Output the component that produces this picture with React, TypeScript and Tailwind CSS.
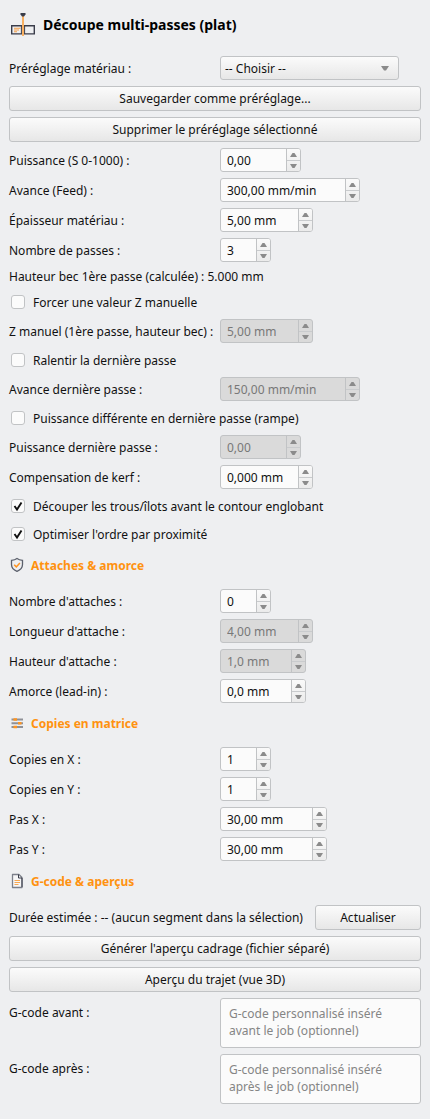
import { useId, type ReactNode } from "react";

function CutIcon() {
  return (
    <svg width="24" height="24" viewBox="0 0 24 24" fill="none" aria-hidden="true">
      <path d="M0.700 12.700h22.600v8.200h-22.600z" stroke="#3a3d4a" strokeWidth="1.400" />
      <path d="M10.400 12.500v8.500M13.600 12.500v8.500" stroke="#3a3d4a" />
      <path d="M3 15.300h6.500M3 17h5M3 18.700h3" stroke="#f5a04a" strokeWidth="1.100" />
      <path d="M11 3h2v20h-2z" fill="#f8b062" />
      <path d="M9.500 0h5v1.500L13 3.500h-2L9.500 1.500z" fill="#3a3d4a" />
    </svg>
  );
}

function ShieldIcon() {
  return (
    <svg width="16" height="16" viewBox="0 0 16 16" fill="none" aria-hidden="true">
      <path
        d="M8 1.500C6.500 2.700 4.500 3.200 2.500 3.300v4.200c0 3.200 2.200 5.500 5.500 6.900 3.300-1.400 5.500-3.700 5.500-6.900V3.300C11.500 3.200 9.500 2.700 8 1.500z"
        stroke="#5b606c"
        strokeWidth="1.300"
      />
      <path d="M5.200 7.800l2.100 2.100 3.600-4" stroke="#ff9420" strokeWidth="1.500" />
    </svg>
  );
}

function SlidersIcon() {
  return (
    <svg width="16" height="16" viewBox="0 0 16 16" aria-hidden="true">
      <path d="M2.500 3.500h11.500v2H2.500zM2.500 7.200h11.500v2H2.500zM2.500 11h11.500v2H2.500z" fill="#8f9197" />
      <path d="M4.500 3.200h3.500v2.600H4.500zM9 6.900h3.500v2.600H9zM4.500 10.700h3.500v2.600H4.500z" fill="#ff9420" />
    </svg>
  );
}

function FileIcon() {
  return (
    <svg width="16" height="16" viewBox="0 0 16 16" fill="none" aria-hidden="true">
      <path d="M10 1.500H3.500v13h9.500V4.500z" fill="#f6f6f7" stroke="#7c808a" strokeWidth="1.300" strokeLinejoin="round" />
      <path d="M9.500 1.500v3.500h3.500v9" stroke="#3a3d4a" />
      <path d="M5.500 7.500h5.500M5.500 9.500h5.500M5.500 11.500h4" stroke="#f8a850" />
    </svg>
  );
}

function Row({ label, id, children }: { label: string; id: string; children: ReactNode }) {
  return (
    <div className="grid grid-cols-[211px_1fr] items-center">
      <label htmlFor={id} className="whitespace-nowrap">
        {label}
      </label>
      {children}
    </div>
  );
}

type SpinProps = { label: string; value: string; width: string; disabled?: boolean };

function SpinRow({ label, value, width, disabled }: SpinProps) {
  const id = useId();
  const arrow = "flex flex-1 justify-center";
  return (
    <Row label={label} id={id}>
      <div
        className={`flex h-6 overflow-hidden rounded-[3px] border border-[#c1c3c5] ${width} ${
          disabled ? "bg-[#dadada] text-[#787878]" : "bg-[#fbfbfb]"
        }`}
      >
        <input
          id={id}
          type="text"
          defaultValue={value}
          disabled={disabled}
          className="min-w-0 flex-1 bg-transparent pl-1.5 outline-none"
        />
        <div
          className={`flex w-3.5 flex-col border-l border-[#c1c3c5] ${
            disabled ? "" : "bg-linear-to-b from-[#fafafa] to-[#ebebeb]"
          }`}
        >
          <button
            type="button"
            aria-label="Augmenter"
            disabled={disabled}
            className={`items-end pb-[3px] ${arrow}`}
          >
            <svg width="7" height="4" viewBox="0 0 7 4" aria-hidden="true">
              <path d="M0 4L2.500 0h2l2.500 4z" fill="#8b8b8b" />
            </svg>
          </button>
          <button
            type="button"
            aria-label="Diminuer"
            disabled={disabled}
            className={`items-start border-t border-[#c9cbcd] pt-[3px] ${arrow}`}
          >
            <svg width="7" height="4" viewBox="0 0 7 4" aria-hidden="true">
              <path d="M0 0l2.500 4h2l2.500-4z" fill="#8b8b8b" />
            </svg>
          </button>
        </div>
      </div>
    </Row>
  );
}

function CheckRow({ label, checked }: { label: string; checked?: boolean }) {
  return (
    <label className="flex h-[22px] items-center gap-2 pl-0.5">
      <span className="grid">
        <input
          type="checkbox"
          defaultChecked={checked}
          className="peer col-start-1 row-start-1 size-3.5 appearance-none rounded-[3px] border border-[#c1c3c5] bg-[#fbfbfb]"
        />
        <svg
          viewBox="0 0 14 14"
          fill="none"
          aria-hidden="true"
          className="pointer-events-none invisible col-start-1 row-start-1 size-3.5 peer-checked:visible"
        >
          <path d="M3.500 7l2.500 3.500 4.500-7" stroke="#111" strokeWidth="1.900" />
        </svg>
      </span>
      {label}
    </label>
  );
}

function Heading({ icon, children }: { icon: ReactNode; children: ReactNode }) {
  return (
    <h2 className="mb-1 flex h-7 items-center gap-1.5 font-bold text-[#ff9210]">
      {icon}
      {children}
    </h2>
  );
}

function Button({ children, className = "w-full" }: { children: ReactNode; className?: string }) {
  return (
    <button
      type="button"
      className={`flex h-[25px] items-center justify-center rounded-[3px] border border-[#c1c3c5] bg-linear-to-b from-[#fbfbfb] to-[#e7e7e7] ${className}`}
    >
      {children}
    </button>
  );
}

function CodeRow({ label, placeholder }: { label: string; placeholder: string }) {
  const id = useId();
  return (
    <div className="grid grid-cols-[211px_1fr] items-start">
      <label htmlFor={id} className="pt-1.5">
        {label}
      </label>
      <textarea
        id={id}
        placeholder={placeholder}
        className="block h-[50px] w-full resize-none rounded-[3px] border border-[#c1c3c5] bg-[#fbfbfb] px-2 py-1.5 outline-none placeholder:text-[#858585]"
      />
    </div>
  );
}

export default function App() {
  return (
    <main className="flex min-h-screen flex-col gap-1.5 bg-[#eeeff1] px-[9px] pb-4 font-['Noto_Sans',sans-serif] text-[12px] leading-[17px] text-[#111]">
      <h1 className="flex h-[50px] items-center gap-2 pl-0.5 text-sm font-bold text-black">
        <CutIcon />
        Découpe multi-passes (plat)
      </h1>

      <Row label="Préréglage matériau :" id="preset">
        <div className="grid w-[179px] items-center">
          <select
            id="preset"
            className="col-start-1 row-start-1 h-6 appearance-none rounded-[3px] border border-[#c1c3c5] bg-linear-to-b from-[#fbfbfb] to-[#e7e7e7] px-1 outline-none"
          >
            <option>-- Choisir --</option>
          </select>
          <svg
            width="8"
            height="5"
            viewBox="0 0 8 5"
            aria-hidden="true"
            className="pointer-events-none col-start-1 row-start-1 mr-2.5 justify-self-end"
          >
            <path d="M0 0h8L5 4.500H3z" fill="#8b8b8b" />
          </svg>
        </div>
      </Row>
      <Button>Sauvegarder comme préréglage...</Button>
      <Button>Supprimer le préréglage sélectionné</Button>

      <SpinRow label="Puissance (S 0-1000) :" value="0,00" width="w-[81px]" />
      <SpinRow label="Avance (Feed) :" value="300,00 mm/min" width="w-[140px]" />
      <SpinRow label="Épaisseur matériau :" value="5,00 mm" width="w-[93px]" />
      <SpinRow label="Nombre de passes :" value="3" width="w-[51px]" />
      <p>Hauteur bec 1ère passe (calculée) : 5.000 mm</p>
      <CheckRow label="Forcer une valeur Z manuelle" />
      <SpinRow label="Z manuel (1ère passe, hauteur bec) :" value="5,00 mm" width="w-[93px]" disabled />
      <CheckRow label="Ralentir la dernière passe" />
      <SpinRow label="Avance dernière passe :" value="150,00 mm/min" width="w-[140px]" disabled />
      <CheckRow label="Puissance différente en dernière passe (rampe)" />
      <SpinRow label="Puissance dernière passe :" value="0,00" width="w-[81px]" disabled />
      <SpinRow label="Compensation de kerf :" value="0,000 mm" width="w-[93px]" />
      <CheckRow label="Découper les trous/îlots avant le contour englobant" checked />
      <CheckRow label="Optimiser l'ordre par proximité" checked />

      <Heading icon={<ShieldIcon />}>Attaches &amp; amorce</Heading>
      <SpinRow label="Nombre d'attaches :" value="0" width="w-[51px]" />
      <SpinRow label="Longueur d'attache :" value="4,00 mm" width="w-[93px]" disabled />
      <SpinRow label="Hauteur d'attache :" value="1,0 mm" width="w-[86px]" disabled />
      <SpinRow label="Amorce (lead-in) :" value="0,0 mm" width="w-[86px]" />

      <Heading icon={<SlidersIcon />}>Copies en matrice</Heading>
      <SpinRow label="Copies en X :" value="1" width="w-[51px]" />
      <SpinRow label="Copies en Y :" value="1" width="w-[51px]" />
      <SpinRow label="Pas X :" value="30,00 mm" width="w-[107px]" />
      <SpinRow label="Pas Y :" value="30,00 mm" width="w-[107px]" />

      <Heading icon={<FileIcon />}>G-code &amp; aperçus</Heading>
      <div className="flex items-center justify-between">
        <p className="whitespace-nowrap">Durée estimée : -- (aucun segment dans la sélection)</p>
        <Button className="w-[106px]">Actualiser</Button>
      </div>
      <Button>Générer l'aperçu cadrage (fichier séparé)</Button>
      <Button>Aperçu du trajet (vue 3D)</Button>
      <CodeRow label="G-code avant :" placeholder="G-code personnalisé inséré avant le job (optionnel)" />
      <CodeRow label="G-code après :" placeholder="G-code personnalisé inséré après le job (optionnel)" />
    </main>
  );
}
